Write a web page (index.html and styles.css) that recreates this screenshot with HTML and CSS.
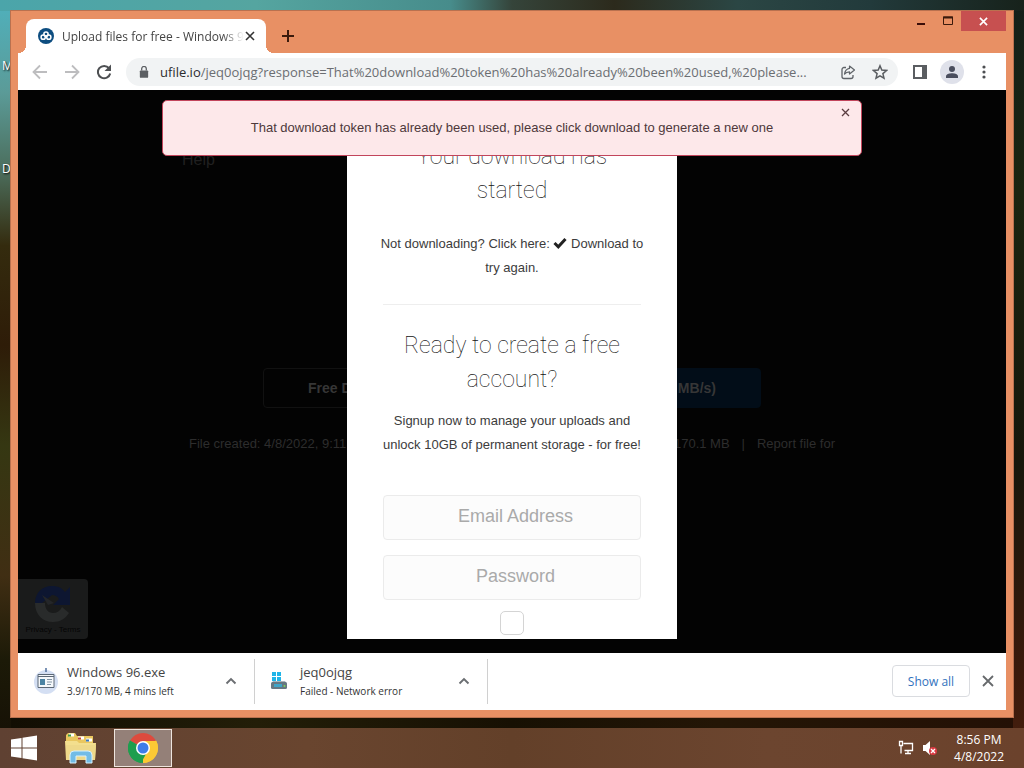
FILE: index.html
```
<!DOCTYPE html>
<html lang="en">
<head>
<meta charset="utf-8">
<title>Desktop</title>
<link rel="stylesheet" href="styles.css">
</head>
<body class="desktop">
<span class="shortcut shortcut-first">M</span>
<span class="shortcut shortcut-second">D</span>

<main class="window">
  <header class="titlebar">
    <div class="tab">
      <svg class="favicon" viewBox="0 0 16 16" width="16" height="16" aria-hidden="true">
        <circle cx="8" cy="8" r="8" fill="#0d4d80"/>
        <g fill="none" stroke="#fff" stroke-width="1.5"><circle cx="8" cy="6" r="2.1"/><circle cx="5.2" cy="9.2" r="2.1"/><circle cx="10.8" cy="9.2" r="2.1"/></g>
      </svg>
      <span class="tab-title">Upload files for free - Windows 9</span>
      <button class="icon-button tab-close" aria-label="Close tab"><svg viewBox="0 0 10 10" width="10" height="10"><path d="M1 1l8 8M9 1l-8 8" stroke="#333" stroke-width="1.6"/></svg></button>
    </div>
    <button class="icon-button new-tab" aria-label="New tab"><svg viewBox="0 0 12 12" width="12" height="12"><path d="M6 0v12M0 6h12" stroke="#3b1a0c" stroke-width="2"/></svg></button>
    <div class="window-controls">
      <button class="icon-button control" aria-label="Minimize"><svg viewBox="0 0 12 10" width="12" height="10"><path d="M2 8h8" stroke="#3b0d08" stroke-width="2"/></svg></button>
      <button class="icon-button control" aria-label="Maximize"><svg viewBox="0 0 12 10" width="12" height="10"><path d="M1.500 1h9v7.500h-9z" fill="none" stroke="#3b1a0c"/><path d="M1 1.500h10" stroke="#3b1a0c" stroke-width="2"/></svg></button>
      <button class="icon-button control control-close" aria-label="Close"><svg viewBox="0 0 10 10" width="9" height="9"><path d="M1 1l8 8M9 1l-8 8" stroke="#fff" stroke-width="1.800"/></svg></button>
    </div>
  </header>

  <nav class="toolbar">
    <button class="icon-button tool" aria-label="Back"><svg viewBox="0 0 16 16" width="16" height="16"><path d="M15 8H2M8 1.500L1.500 8 8 14.500" fill="none" stroke="#bdbdbf" stroke-width="1.800"/></svg></button>
    <button class="icon-button tool" aria-label="Forward"><svg viewBox="0 0 16 16" width="16" height="16"><path d="M1 8h13M8 1.500L14.500 8 8 14.500" fill="none" stroke="#bdbdbf" stroke-width="1.800"/></svg></button>
    <button class="icon-button tool" aria-label="Reload"><svg viewBox="0 0 16 16" width="16" height="16"><path d="M13 4.200A6.200 6.200 0 1 0 14.200 9.500" fill="none" stroke="#4d4f52" stroke-width="2"/><path d="M15 .500v6.500H8.500z" fill="#4d4f52"/></svg></button>
    <div class="omnibox">
      <svg viewBox="0 0 10 13" width="10" height="12" aria-hidden="true"><rect x="0.500" y="4.800" width="9" height="8" rx="1" fill="#5c5f63"/><path d="M2.500 5V3a2.500 2.500 0 0 1 5 0v2" fill="none" stroke="#5c5f63" stroke-width="1.400"/></svg>
      <a class="url" href="#"><span class="host">ufile.io</span>/jeq0ojqg?response=That%20download%20token%20has%20already%20been%20used,%20please...</a>
      <button class="icon-button action" aria-label="Share"><svg viewBox="0 0 16 16" width="16" height="16"><path d="M6 3.500H4a2 2 0 0 0-2 2v7a2 2 0 0 0 2 2h7a2 2 0 0 0 2-2V11" fill="none" stroke="#5f6368" stroke-width="1.300"/><path d="M9.500 2l5 4-5 4V7.800c-2.500 0-3.800.7-5 2.400.4-3 2-5.400 5-5.800z" fill="none" stroke="#5f6368" stroke-width="1.200" stroke-linejoin="round"/></svg></button>
      <button class="icon-button action" aria-label="Bookmark"><svg viewBox="0 0 16 16" width="16" height="16"><path d="M8 1.800l1.800 4.300 4.700.4-3.600 3.100 1.100 4.600L8 11.800l-4 2.400 1.100-4.600L1.500 6.500l4.700-.4z" fill="none" stroke="#5a5d61" stroke-width="1.500"/></svg></button>
    </div>
    <button class="icon-button tool" aria-label="Side panel"><svg viewBox="0 0 14 14" width="14" height="14"><path d="M1 1h12v12H1z" fill="#fff" stroke="#5a5d61" stroke-width="2"/><path d="M9 1h4v12H9z" fill="#5a5d61"/></svg></button>
    <button class="icon-button tool avatar" aria-label="Profile"><svg viewBox="0 0 14 14" width="14" height="14"><circle cx="7" cy="4" r="3" fill="#4a4e5e"/><path d="M1 13v-1.500C1 9 4.500 8.300 7 8.300s6 .7 6 3.200V13z" fill="#4a4e5e"/></svg></button>
    <button class="icon-button tool" aria-label="Menu"><svg viewBox="0 0 4 14" width="4" height="14"><g fill="#4d4f52"><circle cx="2" cy="2" r="1.600"/><circle cx="2" cy="7" r="1.600"/><circle cx="2" cy="12" r="1.600"/></g></svg></button>
  </nav>

  <section class="page">
    <div class="site">
      <a class="site-help" href="#">Help</a>
      <div class="site-actions">
        <button class="site-button site-free">Free Download</button>
        <button class="site-button site-premium">MB/s)</button>
      </div>
      <div class="site-facts"><span>File created: 4/8/2022, 9:11</span><span class="facts-right"><span>170.1 MB</span><span>|</span><a class="site-report" href="#">Report file for</a></span></div>
    </div>

    <div class="captcha">
      <svg viewBox="0 0 40 40" width="40" height="40" aria-hidden="true"><path d="M2 19C2 9 9 2 19 2c6 0 10 2 13 6l5-5v18H20l6-6c-2-3-4-4-7-4L9 19z" fill="#0d1631"/><path d="M9 11l12 8-6 2z" fill="#242629"/><path d="M2 19c0 12 8 19 18 19 7 0 12-3 16-9l-7-6c-2 4-5 6-9 6-5 0-8-4-8-10z" fill="#292b2b"/></svg>
      <span class="captcha-text">Privacy - Terms</span>
    </div>

    <div class="overlay">
      <div class="modal" role="dialog" aria-label="Download started">
        <h1 class="modal-title">Your download has started</h1>
        <p class="modal-text">Not downloading? Click here: <a class="retry" href="#"><svg class="tick" viewBox="0 0 14 12" width="14" height="12" aria-hidden="true"><path d="M1.500 6l3.800 3.800L12.500 2" fill="none" stroke="#222" stroke-width="3"/></svg> Download</a> to try again.</p>
        <hr class="divider">
        <h2 class="modal-title signup-title">Ready to create a free account?</h2>
        <p class="modal-text">Signup now to manage your uploads and unlock 10GB of permanent storage - for free!</p>
        <form class="signup">
          <input class="field" type="email" placeholder="Email Address" aria-label="Email Address">
          <input class="field" type="password" placeholder="Password" aria-label="Password">
          <input class="agree" type="checkbox" aria-label="Agree to terms">
        </form>
      </div>
    </div>

    <div class="alert" role="alert">
      <span>That download token has already been used, please click download to generate a new one</span>
      <button class="icon-button alert-close" aria-label="Dismiss"><svg viewBox="0 0 9 9" width="9" height="9"><path d="M1 1l7 7M8 1L1 8" stroke="#5a3c40" stroke-width="1.300"/></svg></button>
    </div>
  </section>

  <footer class="downloads">
    <div class="download">
      <svg class="download-icon" viewBox="0 0 26 26" width="26" height="26" aria-hidden="true"><circle cx="13" cy="14" r="12" fill="#d4dff3"/><path d="M13 0v4" stroke="#4f6f9c" stroke-width="1.500"/><path d="M5 6.500h16v13H5z" fill="#f5f8fb" stroke="#5c6876"/><path d="M5 8.500h16" stroke="#5c6876"/><path d="M7 11h5v6H7z" fill="#4b83a3"/><path d="M14 11.500h5M14 14h5M14 16.500h4" stroke="#8295a5"/></svg>
      <div class="download-info"><span class="download-name">Windows 96.exe</span><span class="download-state">3.9/170 MB, 4 mins left</span></div>
      <button class="icon-button chevron" aria-label="Options"><svg viewBox="0 0 12 8" width="12" height="8"><path d="M1.500 6.500L6 2l4.500 4.500" fill="none" stroke="#6b6e72" stroke-width="1.900"/></svg></button>
    </div>
    <div class="download">
      <svg class="download-icon" viewBox="0 0 26 26" width="26" height="26" aria-hidden="true"><path d="M6 4h4v4H6zM11 4h4v4h-4zM6 9h4v4H6zM11 9h4v4h-4z" fill="#1fb5e8"/><path d="M7 13h12l2 3H5z" fill="#a9b4bc"/><rect x="5" y="14" width="16" height="7" rx="1.500" fill="#667883"/><path d="M8 17.500h8" stroke="#3fa5c8" stroke-width="3"/><circle cx="18.500" cy="18" r="1" fill="#7ed957"/></svg>
      <div class="download-info"><span class="download-name">jeq0ojqg</span><span class="download-state">Failed - Network error</span></div>
      <button class="icon-button chevron" aria-label="Options"><svg viewBox="0 0 12 8" width="12" height="8"><path d="M1.500 6.500L6 2l4.500 4.500" fill="none" stroke="#6b6e72" stroke-width="1.900"/></svg></button>
    </div>
    <div class="downloads-end">
      <button class="show-all">Show all</button>
      <button class="icon-button" aria-label="Close downloads bar"><svg viewBox="0 0 12 12" width="12" height="12"><path d="M1 1l10 10M11 1L1 11" stroke="#66696c" stroke-width="1.800"/></svg></button>
    </div>
  </footer>
</main>

<nav class="taskbar">
  <button class="task" aria-label="Start"><svg viewBox="0 0 28 26" width="28" height="26"><path d="M1 4.500L11.500 3v9.500H1zM12.500 2.800L27 .5v12H12.500zM1 13.500h10.500V23L1 21.500zM12.500 13.500H27v12l-14.500-2.300z" fill="#fff"/></svg></button>
  <button class="task" aria-label="File Explorer"><svg viewBox="0 0 34 32" width="34" height="32"><path d="M2 3l2-2h7l2 3h16v7H2z" fill="#e9c75f"/><path d="M5 3h5M14 6h6M22 8h6" stroke="#fff" stroke-width="3"/><path d="M4 3.500h3" stroke="#3c9a48" stroke-width="2"/><path d="M14 6.500h3" stroke="#c24a38" stroke-width="2"/><path d="M22 8.500h3" stroke="#3978c0" stroke-width="2"/><path d="M1 9h12l2 2h17l-1 17H2z" fill="#f3df8e"/><path d="M2 13h30l-1 15H2z" fill="#eed98a"/><path d="M6 31v-8q0-4 4-4h14q4 0 4 4v8h-6v-7h-10v7z" fill="#72bce6" stroke="#d8f1fc"/></svg></button>
  <button class="task task-active" aria-label="Google Chrome"><svg viewBox="0 0 30 30" width="30" height="30"><path d="M15 15L2.010 7.500A15 15 0 0 1 27.990 7.500z" fill="#dd4b3e"/><path d="M15 15L27.990 7.500A15 15 0 0 1 15 30z" fill="#fcc934"/><path d="M15 15v15A15 15 0 0 1 2.010 7.500z" fill="#1e9e4e"/><path d="M15 8h13.300A15 15 0 0 1 15 30l6.500-11.500z" fill="#fcc934"/><path d="M2 7.500L8.800 18.500 15 22l3-1-5 8.900A15 15 0 0 1 2 7.500z" fill="#1e9e4e"/><circle cx="15" cy="15" r="7" fill="#fff"/><circle cx="15" cy="15" r="5.500" fill="#3f7de8"/></svg></button>
  <div class="tray">
    <svg viewBox="0 0 16 16" width="16" height="16" role="img" aria-label="Network"><path d="M5.500 3.500h9v7h-8M10 10.500v3M7 13.500h6" fill="none" stroke="#fff" stroke-width="1.300"/><path d="M1.500 1.500h3v4h-3zM3 5.500v8" fill="none" stroke="#fff" stroke-width="1.300"/></svg>
    <svg viewBox="0 0 16 16" width="16" height="16" role="img" aria-label="Muted"><path d="M1 5h2.500L8 1v14l-4.500-4H1z" fill="#fff"/><circle cx="11" cy="11" r="4" fill="#d93a42"/><path d="M9 9l4 4M13 9l-4 4" stroke="#fff" stroke-width="1.300"/></svg>
    <div class="clock"><span>8:56 PM</span><span>4/8/2022</span></div>
  </div>
</nav>
</body>
</html>
```
FILE: styles.css
```
* { box-sizing: border-box; }

.desktop {
  margin: 0;
  min-height: 100vh;
  display: flex;
  flex-direction: column;
  position: relative;
  font-family: "Open Sans", "Noto Sans", sans-serif;
  color: #444;
  background:
    linear-gradient(90deg, #4ba5aa 0%, #55a5a0 25%, #478c8b 44%, #35443a 50%, #2c2a1c 60%, #2b4644 72%, #223a3b 85%, #17221b 100%) top / 100% 11px no-repeat,
    linear-gradient(180deg, #4fb1bd 0%, #5b9b98 12%, #4c6f5e 22%, #342b0e 32%, #2e1c08 45%, #353712 58%, #402e13 75%, #1c1a08 86%, #140d04 100%) left / 11px 100% no-repeat,
    linear-gradient(180deg, #14201a 0%, #1b2510 25%, #17170b 60%, #3b1a0b 88%, #47200f 100%) right / 11px 100% no-repeat,
    linear-gradient(90deg, #110d03, #231e08 25%, #171003 50%, #241606 70%, #241005);
}

.icon-button {
  display: flex;
  align-items: center;
  justify-content: center;
  padding: 0;
  border: 0;
  background: none;
}

.shortcut {
  position: absolute;
  left: 2px;
  font-size: 12px;
  line-height: 16px;
  color: #fff;
  text-shadow: 1px 1px 2px #000;
}
.shortcut-first { top: 58px; }
.shortcut-second { top: 161px; }

.window {
  flex: 1;
  position: relative;
  display: flex;
  flex-direction: column;
  margin: 10px;
  padding: 0 7px 7px;
  border: 1px solid #b9714f;
  background: #e89064;
}

.titlebar {
  display: flex;
  height: 42px;
  padding: 8px 0 0 8px;
}
.tab {
  position: relative;
  display: flex;
  align-items: center;
  gap: 8px;
  width: 240px;
  padding: 0 10px 0 12px;
  border-radius: 8px 8px 0 0;
  background: #fff;
}
.tab::before, .tab::after {
  content: "";
  position: absolute;
  bottom: 0;
  width: 8px;
  height: 8px;
}
.tab::before { left: -8px; background: radial-gradient(circle at 0 0, transparent 8px, #fff 8px); }
.tab::after { right: -8px; background: radial-gradient(circle at 100% 0, transparent 8px, #fff 8px); }
.tab-title {
  flex: 1;
  margin-right: -8px;
  white-space: nowrap;
  font-size: 12px;
  -webkit-mask-image: linear-gradient(90deg, #000 88%, transparent);
  mask-image: linear-gradient(90deg, #000 88%, transparent);
}
.tab-close { width: 12px; height: 24px; }
.new-tab { width: 28px; height: 34px; margin-left: 8px; }
.window-controls {
  display: flex;
  align-self: flex-start;
  height: 20px;
  margin: -8px 0 0 auto;
}
.control { width: 27px; }
.control-close { width: 45px; background: #c75050; }

.toolbar {
  display: flex;
  align-items: center;
  height: 37px;
  padding: 0 10px 0 10px;
  gap: 8px;
  background: #fff;
}
.tool { width: 24px; height: 24px; }
.omnibox {
  flex: 1;
  min-width: 0;
  display: flex;
  align-items: center;
  height: 28px;
  margin: 0 2px;
  padding: 0 10px 0 13px;
  border-radius: 14px;
  background: #f1f3f4;
}
.url {
  flex: 1;
  overflow: hidden;
  margin-left: 11px;
  white-space: nowrap;
  font-size: 13px;
  color: #6b6e72;
  text-decoration: none;
}
.host { color: #2b2c2e; }
.action { width: 16px; height: 24px; margin-left: 16px; }
.avatar { border-radius: 50%; background: #dfe1ea; }

.page {
  flex: 1;
  position: relative;
  background: #030303;
  font-family: "Liberation Sans", Arial, sans-serif;
  font-size: 13px;
}
.site {
  width: 66%;
  margin: 0 auto;
  padding: 60px 0 0;
  color: #2d2d2d;
}
.site-help {
  display: block;
  margin-left: -4px;
  font-size: 16px;
  line-height: 20px;
  color: #202020;
  text-decoration: none;
}
.site-actions {
  display: flex;
  justify-content: center;
  gap: 10px;
  margin-top: 198px;
}
.site-button {
  width: 244px;
  height: 40px;
  padding: 0 44px;
  border: 1px solid #111;
  border-radius: 4px;
  background: #030303;
  color: #363636;
  font: bold 14px "Liberation Sans", Arial, sans-serif;
}
.site-free { text-align: left; }
.site-premium { text-align: right; border-color: #020d18; background: #020d18; }
.site-facts {
  display: flex;
  justify-content: space-between;
  margin-top: 26px;
  padding: 0 3px;
  line-height: 20px;
}
.facts-right { display: flex; gap: 12px; }
.site-report { color: inherit; text-decoration: none; }

.captcha {
  position: absolute;
  left: 0;
  bottom: 14px;
  display: flex;
  flex-direction: column;
  align-items: center;
  width: 70px;
  height: 60px;
  padding-top: 5px;
  border-radius: 0 4px 4px 0;
  background: #1a1b1b;
}
.captcha-text { font-size: 8px; line-height: 12px; color: #050505; }

.overlay {
  position: absolute;
  inset: 0;
  display: flex;
  justify-content: center;
  padding: 14px 0;
}
.modal {
  width: 330px;
  padding: 36px 36px 0;
  overflow: hidden;
  background: #fff;
  text-align: center;
}
.modal-title {
  margin: 0;
  font: 100 23px/34px Roboto, "Open Sans", sans-serif;
  color: #111;
}
.modal-text { margin: 24px -4px; line-height: 24px; color: #3c3c3c; }
.retry { color: inherit; text-decoration: none; }
.tick { vertical-align: -1px; }
.divider { margin: 0; border: 0; border-top: 1px solid #eee; }
.signup-title { margin-top: 24px; }
.signup-title + .modal-text { margin-top: 12px; }
.signup {
  display: flex;
  flex-direction: column;
  align-items: center;
  margin-top: 38px;
}
.field {
  width: 100%;
  height: 45px;
  margin-bottom: 15px;
  padding: 0 8px 3px 15px;
  border: 1px solid #ebebeb;
  border-radius: 4px;
  background: #fcfcfc;
  text-align: center;
  font: 18px "Liberation Sans", Arial, sans-serif;
}
.field::placeholder { color: #aaa; }
.agree {
  appearance: none;
  width: 24px;
  height: 24px;
  margin: -4px 0 0;
  border: 1px solid #d4d4d4;
  border-radius: 5px;
  background: #fff;
}

.alert {
  position: absolute;
  top: 10px;
  left: 50%;
  transform: translateX(-50%);
  display: flex;
  align-items: center;
  justify-content: center;
  width: 700px;
  max-width: 96%;
  height: 56px;
  padding-bottom: 2px;
  border: 1px solid #c2455c;
  border-radius: 5px;
  background: #fde8ea;
  color: #4e383b;
}
.alert-close { position: absolute; top: 3px; right: 8px; width: 16px; height: 16px; }

.downloads {
  display: flex;
  align-items: center;
  height: 57px;
  padding-bottom: 1px;
  background: #fff;
}
.download {
  display: flex;
  align-items: center;
  width: 237px;
  height: 45px;
  padding: 0 17px 0 15px;
  border-right: 1px solid #d0d0d0;
}
.download + .download { width: 233px; padding-left: 11px; }
.download-info {
  flex: 1;
  display: flex;
  flex-direction: column;
  margin-left: 8px;
}
.download-name { font-size: 13px; line-height: 20px; }
.download-state { font-size: 10px; line-height: 18px; color: #333; }
.chevron { width: 12px; height: 24px; }
.downloads-end {
  display: flex;
  align-items: center;
  gap: 12px;
  margin-left: auto;
  padding-right: 12px;
}
.show-all {
  width: 78px;
  height: 32px;
  padding: 0;
  border: 1px solid #dadce0;
  border-radius: 4px;
  background: #fff;
  color: #3272bd;
  font: 500 12px "Open Sans", sans-serif;
}

.taskbar {
  display: flex;
  align-items: center;
  height: 40px;
  padding: 0 20px 0 0;
  background: linear-gradient(90deg, #5f4132, #69452f 30%, #634029 50%, #6c452f 75%, #6b422c);
}
.task {
  display: flex;
  align-items: center;
  justify-content: center;
  width: 58px;
  height: 38px;
  padding: 0;
  border: 0;
  background: none;
}
.task:first-child { width: 48px; }
.task:nth-child(2) { width: 66px; }
.task-active { border: 1px solid #eee5de; background: #948078; }
.tray {
  display: flex;
  align-items: center;
  gap: 8px;
  margin-left: auto;
  color: #fff;
}
.clock {
  display: flex;
  flex-direction: column;
  align-items: center;
  margin-left: 8px;
  font-size: 12px;
  line-height: 17px;
}
```
